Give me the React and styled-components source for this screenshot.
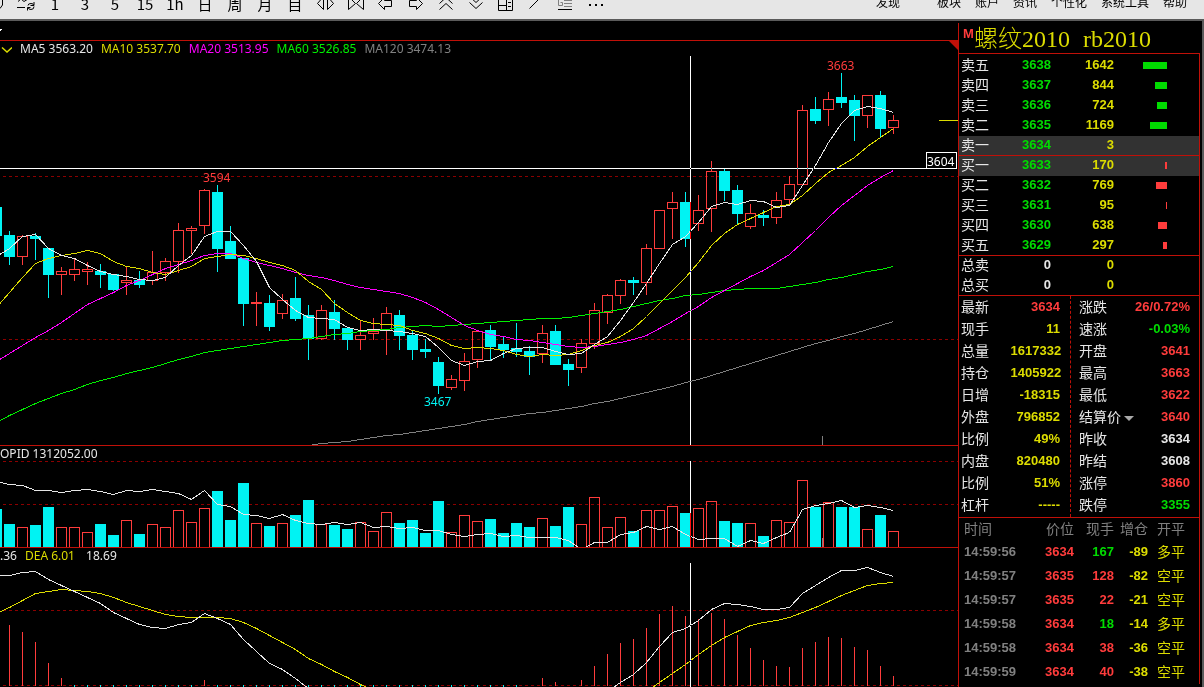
import React from 'react';
import styled, { createGlobalStyle } from 'styled-components';

const GlobalStyle = createGlobalStyle`
  * {
    box-sizing: border-box;
  }

  body {
    margin: 0;
    background-color: #000;
    font-family: 'Liberation Sans', 'Noto Sans CJK SC', sans-serif;
  }
`;

const colors = {
  line: '#c01008',
  grid: '#8c0000',
  red: '#ff3c3c',
  cyan: '#00f3f3',
  green: '#00dc00',
  yellow: '#dcdc00',
  magenta: '#ff00ff',
  lime: '#00f000',
  white: '#e6e6e6',
  gray: '#808080',
};

const Page = styled.div`
  min-height: 100vh;
  display: flex;
  flex-direction: column;
`;

const Toolbar = styled.header`
  display: flex;
  align-items: flex-start;
  height: 21px;
  overflow: hidden;
  background-color: #e6e6e6;
  border-bottom: 2px solid #5a5a5a;
`;

const ToolButton = styled.button`
  flex: none;
  width: ${(props) => (props.$half ? 10 : 30)}px;
  height: 19px;
  padding: 0;
  border: none;
  background: none;
  color: #000;
  cursor: pointer;

  svg {
    display: block;
  }
`;

const PeriodButton = styled(ToolButton)`
  padding-bottom: 12px;
  font-family: 'Noto Sans CJK SC', sans-serif;
  font-size: 15px;
  line-height: 7px;
`;

const Menu = styled.nav`
  display: flex;
  gap: 14px;
  margin-left: auto;
  padding-right: 17px;

  a {
    color: #000;
    font-family: 'Noto Sans CJK SC', sans-serif;
    font-size: 12px;
    line-height: 3px;
    text-decoration: none;
    white-space: nowrap;
  }

  a:first-child {
    margin-right: 23px;
  }
`;

const Workspace = styled.div`
  flex: 1;
  display: flex;
  padding-top: 2px;
  padding-right: 2px;
  border-right: 2px solid #5a5a5a;
`;

const Charts = styled.main`
  flex: 1;
  min-width: 0;
  border-right: 1px solid ${colors.line};
`;

const TabStrip = styled.div`
  height: 18px;
  border-bottom: 1px solid ${colors.line};

  svg {
    display: block;
  }
`;

const Pane = styled.section`
  overflow: hidden;

  & + & {
    border-top: 1px solid ${colors.line};
  }
`;

const Legend = styled.div`
  display: flex;
  gap: 8px;
  height: 15px;
  color: ${colors.white};
  font-family: 'Noto Sans', sans-serif;
  font-size: 12px;
  line-height: 15px;
  white-space: nowrap;
`;

const LegendItem = styled.span`
  color: ${(props) => props.$color};
`;

const FoldButton = styled.button`
  width: 12px;
  height: 15px;
  padding: 0;
  border: none;
  background: none;

  svg {
    display: block;
  }
`;

const CornerMark = styled.span`
  width: 9px;
  height: 9px;
  margin-left: auto;
  background-color: ${colors.line};
  clip-path: polygon(0 0, 100% 0, 100% 100%);
`;

const Plot = styled.svg`
  display: block;
  width: 100%;
  height: ${(props) => props.$height}px;
  shape-rendering: crispEdges;

  text {
    font-family: 'Noto Sans', sans-serif;
    font-size: 12px;
  }

  .cross {
    stroke: #fff;
    mix-blend-mode: difference;
  }
`;

const Side = styled.aside`
  flex: none;
  width: 241px;
`;

const Contract = styled.h1`
  display: flex;
  height: 30px;
  margin: 0;
  padding-left: 4px;
  color: ${colors.yellow};
  font-family: 'Liberation Serif', 'Noto Sans CJK SC', serif;
  font-size: 24px;
  font-weight: 300;
  line-height: 32px;
  white-space: nowrap;

  .mark {
    width: 11px;
    color: ${colors.red};
    font-family: 'Liberation Sans', sans-serif;
    font-size: 13px;
    font-weight: bold;
    line-height: 21px;
  }

  .code {
    margin-left: 13px;
  }
`;

const Panel = styled.div`
  border-top: 1px solid ${colors.line};
  border-right: 1px solid ${colors.line};
`;

const DataTable = styled.table`
  width: 100%;
  table-layout: fixed;
  border-collapse: collapse;
  font-size: 13px;
  font-weight: bold;

  th,
  td {
    height: ${(props) => props.$row}px;
    padding: 0;
    line-height: ${(props) => props.$row}px;
    text-align: right;
    vertical-align: top;
    white-space: nowrap;
  }

  th {
    color: ${colors.white};
    font-family: 'Noto Sans CJK SC', sans-serif;
    font-size: 14px;
    font-weight: 400;
    line-height: ${(props) => props.$row - 2}px;
    text-align: left;
  }
`;

const BookTable = styled(DataTable)`
  margin-top: 2px;

  th {
    padding-left: 2px;
    line-height: 16px;
  }

  td {
    line-height: 18px;
    vertical-align: top;
  }

  td:nth-child(4) {
    padding-top: 6px;
  }

  tr:last-child th,
  tr:last-child td {
    height: 19px;
  }
`;

const BookRow = styled.tr`
  background-color: ${(props) => (props.$best ? '#323232' : 'transparent')};
  box-shadow: ${(props) =>
    props.$line ? `inset 0 -1px 0 ${colors.line}` : 'none'};
`;

const Cell = styled.td`
  color: ${(props) => props.$color || colors.yellow};
`;

const SizeBar = styled.span`
  display: block;
  height: 7px;
  margin-left: auto;
  background-color: ${(props) => props.$color};
`;

const Quotes = styled.div`
  display: flex;
  height: 221px;
`;

const QuoteColumn = styled.div`
  flex: ${(props) => (props.$left ? '0 0 112px' : '1')};
  padding: ${(props) => (props.$left ? '0 10px 0 2px' : '0 9px 0 8px')};
  border-right: ${(props) =>
    props.$left ? `1px dashed ${colors.line}` : 'none'};
`;

const PriceMenu = styled.button`
  display: inline-flex;
  align-items: center;
  gap: 3px;
  padding: 0;
  border: none;
  background: none;
  color: inherit;
  font: inherit;
  line-height: 20px;

  &::after {
    content: '';
    margin-top: 4px;
    border: 5px solid transparent;
    border-top-color: #aaa;
    border-bottom: none;
  }
`;

const TickTable = styled(DataTable)`
  thead th {
    height: 22px;
    color: ${colors.gray};
    line-height: 20px;
    text-align: right;
  }

  thead th:first-child,
  tbody td:first-child {
    padding-left: 5px;
    text-align: left;
  }

  thead th:last-child,
  tbody td:last-child {
    padding-left: 9px;
    text-align: left;
  }

  tbody td:last-child {
    font-family: 'Noto Sans CJK SC', sans-serif;
    font-size: 14px;
    font-weight: 400;
    line-height: 22px;
  }
`;

// [rising, high, low, body top, body bottom, volume top]
const bars = [
  [0, 207, 236, 207, 236, 509],
  [0, 231, 265, 235, 257, 524],
  [1, 235, 265, 236, 257, 527],
  [0, 233, 260, 236, 239, 525],
  [0, 248, 298, 248, 275, 507],
  [1, 267, 295, 271, 275, 527],
  [1, 259, 281, 269, 275, 527],
  [1, 262, 285, 269, 272, 532],
  [0, 264, 288, 271, 275, 524],
  [0, 274, 291, 274, 290, 535],
  [1, 266, 295, 280, 283, 520],
  [0, 271, 288, 280, 285, 534],
  [1, 251, 285, 272, 281, 524],
  [1, 258, 281, 261, 273, 527],
  [1, 223, 273, 230, 262, 510],
  [1, 226, 254, 228, 231, 522],
  [1, 189, 234, 190, 226, 508],
  [0, 185, 272, 192, 249, 491],
  [0, 226, 259, 241, 259, 520],
  [0, 258, 326, 258, 304, 483],
  [1, 292, 326, 302, 304, 523],
  [0, 295, 331, 303, 327, 526],
  [1, 294, 319, 300, 314, 523],
  [0, 277, 321, 298, 319, 515],
  [0, 305, 360, 315, 339, 500],
  [1, 305, 340, 310, 339, 524],
  [0, 300, 340, 312, 329, 525],
  [0, 328, 350, 328, 340, 529],
  [1, 320, 350, 335, 340, 522],
  [1, 318, 340, 331, 334, 531],
  [1, 307, 355, 313, 331, 512],
  [0, 310, 350, 315, 336, 523],
  [0, 331, 360, 335, 350, 520],
  [0, 339, 358, 349, 352, 533],
  [0, 357, 394, 362, 386, 501],
  [1, 375, 390, 379, 388, 532],
  [1, 353, 391, 361, 381, 515],
  [1, 330, 368, 331, 360, 521],
  [0, 325, 360, 330, 347, 519],
  [0, 337, 358, 344, 350, 533],
  [0, 323, 357, 348, 352, 523],
  [0, 346, 375, 351, 357, 527],
  [1, 325, 363, 333, 354, 518],
  [0, 325, 365, 331, 365, 526],
  [0, 359, 386, 364, 370, 507],
  [1, 339, 373, 343, 368, 524],
  [1, 303, 349, 310, 344, 497],
  [1, 294, 324, 295, 313, 527],
  [1, 279, 304, 280, 296, 517],
  [0, 277, 295, 280, 283, 531],
  [1, 244, 295, 248, 283, 510],
  [1, 210, 249, 210, 249, 510],
  [1, 192, 239, 202, 209, 506],
  [0, 192, 247, 202, 239, 513],
  [1, 195, 231, 210, 224, 508],
  [1, 161, 232, 171, 209, 501],
  [0, 169, 201, 171, 191, 521],
  [0, 185, 224, 190, 214, 523],
  [1, 204, 229, 213, 227, 523],
  [0, 210, 226, 215, 218, 536],
  [1, 192, 224, 200, 218, 520],
  [1, 176, 204, 184, 200, 522],
  [1, 105, 185, 110, 185, 480],
  [0, 97, 124, 109, 121, 507],
  [1, 92, 126, 99, 110, 502],
  [0, 73, 108, 97, 103, 507],
  [0, 95, 141, 100, 116, 507],
  [1, 95, 128, 95, 116, 529],
  [0, 91, 138, 95, 129, 515],
  [1, 115, 134, 120, 128, 531],
];

const ma5 = [
  256, 248, 236, 234, 248, 255, 258, 265, 271, 274, 276, 279, 280, 277, 265,
  255, 236, 231, 231, 245, 261, 287, 299, 310, 317, 318, 319, 327, 330, 329,
  330, 331, 333, 336, 347, 360, 365, 361, 360, 353, 348, 347, 347, 351, 354,
  353, 344, 336, 320, 302, 283, 263, 244, 236, 222, 206, 202, 204, 200, 201,
  207, 205, 185, 165, 142, 123, 110, 106, 108, 112,
];

const ma10 = [
  307, 292, 277, 263, 258, 255, 253, 250, 253, 261, 266, 268, 272, 274, 270,
  266, 258, 256, 254, 255, 258, 262, 265, 270, 281, 289, 303, 312, 320, 323,
  324, 325, 330, 333, 338, 345, 348, 347, 348, 350, 354, 356, 354, 355, 354,
  350, 345, 342, 336, 328, 316, 303, 290, 277, 262, 245, 233, 224, 218, 212,
  206, 204, 195, 183, 172, 165, 157, 146, 137, 128,
];

const ma20 = [
  361, 353, 345, 337, 330, 322, 313, 304, 298, 292, 285, 280, 274, 268, 264,
  260, 255, 253, 253, 258, 262, 265, 268, 272, 275, 277, 280, 284, 287, 289,
  291, 293, 297, 302, 309, 317, 325, 330, 334, 336, 339, 340, 342, 344, 346,
  347, 346, 344, 342, 339, 335, 328, 321, 313, 306, 297, 290, 283, 276, 270,
  262, 254, 242, 230, 217, 205, 195, 185, 177, 170,
];

const ma60 = [
  422, 415, 409, 403, 398, 393, 389, 384, 380, 377, 373, 370, 367, 363, 359,
  356, 352, 350, 348, 346, 344, 342, 340, 339, 338, 336, 334, 333, 331, 330,
  329, 327, 326, 325, 326, 325, 324, 323, 322, 321, 320, 319, 318, 318, 317,
  315, 313, 311, 309, 306, 303, 300, 298, 295, 294, 292, 290, 289, 288, 288,
  288, 286, 284, 282, 279, 277, 274, 271, 269, 266,
];

// starts at bar 23
const ma120 = [
  445, 443, 442, 441, 439, 437, 435, 434, 432, 430, 428, 426, 424, 421, 419,
  417, 415, 413, 412, 410, 408, 406, 403, 401, 398, 395, 392, 389, 386, 382,
  379, 375, 371, 367, 363, 359, 355, 351, 347, 343, 340, 336, 333, 329, 325,
  321,
];

const opid = [
  481, 484, 485, 490, 490, 492, 490, 489, 491, 494, 490, 491, 489, 491, 493,
  499, 490, 504, 506, 514, 515, 518, 514, 520, 523, 524, 522, 524, 522, 527,
  526, 528, 527, 530, 530, 534, 536, 534, 533, 536, 535, 537, 537, 537, 540,
  549, 542, 542, 534, 532, 526, 529, 526, 534, 539, 538, 538, 546, 540, 543,
  537, 532, 509, 505, 503, 500, 507, 505, 507, 510,
];

const diffLeft = [
  575, 575, 572, 571, 579, 585, 591, 597, 603, 612, 618, 624, 627, 628, 624,
  622, 613, 618, 624, 639, 651, 663, 669, 678, 688,
];

// starts at bar 46
const diffRight = [
  691, 682, 674, 662, 646, 632, 628, 620, 609, 603, 604, 606, 609, 609, 607,
  593, 585, 577, 570, 570, 567, 572, 576,
];

const deaLeft = [
  613, 607, 600, 593, 591, 589, 590, 591, 593, 597, 602, 606, 610, 614, 616,
  617, 617, 617, 618, 622, 628, 635, 642, 649, 658, 664, 671, 677, 684, 690,
];

// starts at bar 49
const deaRight = [
  691, 682, 673, 664, 654, 645, 637, 631, 625, 622, 620, 617, 612, 607, 601,
  595, 590, 585, 583, 582,
];

const macdUp = {
  0: 625, 1: 632, 2: 642, 3: 663, 4: 678, 15: 680, 41: 678, 42: 682, 44: 680,
  45: 666, 46: 654, 47: 643, 48: 639, 49: 628, 50: 614, 51: 606, 52: 616,
  53: 619, 54: 613, 55: 619, 56: 635, 57: 648, 58: 660, 59: 666, 60: 667,
  61: 648, 62: 642, 63: 637, 64: 638, 65: 647, 66: 650, 67: 666, 68: 676,
};

const macdDown = Array.from({ length: 35 }, (_, i) => i + 5).filter(
  (i) => i !== 15
);

const barX = (i) => 9 + i * 13;

const asks = [
  { name: '卖五', price: 3638, size: 1642, bar: 24 },
  { name: '卖四', price: 3637, size: 844, bar: 12 },
  { name: '卖三', price: 3636, size: 724, bar: 10 },
  { name: '卖二', price: 3635, size: 1169, bar: 17 },
  { name: '卖一', price: 3634, size: 3, bar: 0, best: true, line: true },
];

const bids = [
  { name: '买一', price: 3633, size: 170, bar: 2, best: true },
  { name: '买二', price: 3632, size: 769, bar: 11 },
  { name: '买三', price: 3631, size: 95, bar: 1 },
  { name: '买四', price: 3630, size: 638, bar: 9 },
  { name: '买五', price: 3629, size: 297, bar: 4, line: true },
];

const totals = ['总卖', '总买'];

const quotesLeft = [
  ['最新', '3634', colors.red],
  ['现手', '11'],
  ['总量', '1617332'],
  ['持仓', '1405922'],
  ['日增', '-18315'],
  ['外盘', '796852'],
  ['比例', '49%'],
  ['内盘', '820480'],
  ['比例', '51%'],
  ['杠杆', '-----'],
];

const quotesRight = [
  ['涨跌', '26/0.72%', colors.red],
  ['速涨', '-0.03%', colors.green],
  ['开盘', '3641', colors.red],
  ['最高', '3663', colors.red],
  ['最低', '3622', colors.red],
  ['结算价', '3640', colors.red],
  ['昨收', '3634', colors.white],
  ['昨结', '3608', colors.white],
  ['涨停', '3860', colors.red],
  ['跌停', '3355', colors.green],
];

const ticks = [
  ['14:59:56', 3634, 167, -89, '多平', colors.green],
  ['14:59:57', 3635, 128, -82, '空平', colors.red],
  ['14:59:57', 3635, 22, -21, '空平', colors.red],
  ['14:59:58', 3634, 18, -14, '多平', colors.green],
  ['14:59:58', 3634, 38, -36, '空平', colors.red],
  ['14:59:59', 3634, 40, -38, '空平', colors.red],
];

const periods = ['1', '3', '5', '15', '1h', '日', '周', '月', '目'];

const tools = [
  { name: '缩小', d: 'M13.5 -3.5L7.5 3.5L13.5 9.5ZM17.5 -3.5L23.5 3.5L17.5 9.5Z' },
  { name: '放大', d: 'M8.5 -3.5L15.5 3.5L8.5 9.5ZM23.5 -3.5L16.5 3.5L23.5 9.5Z' },
  { name: '左移', d: 'M8.5 3.5L14.5 -2.5V0.5H21.5V6.5H14.5V9.5Z' },
  { name: '右移', d: 'M22.5 3.5L16.5 -2.5V0.5H9.5V6.5H16.5V9.5Z' },
  { name: '上翻', d: 'M9.5 3.5L16 -2.5L22.5 3.5M9.5 9.5L16 3.5L22.5 9.5' },
  { name: '下翻', d: 'M9.5 -3.5L16 2.5L22.5 -3.5M9.5 2.5L16 8.5L22.5 2.5' },
  {
    name: '布局',
    d: 'M8.5 -4.5H22.5V10.5H8.5ZM16.5 -4V10M9 5.5H16M18 2.5H21M18 6.5H21',
  },
  { name: '画线', d: 'M9.5 8.5L20.5 -2.5' },
];

function Line({ ys, start = -1, color }) {
  const points = ys
    .map((y, i) => `${barX(start + i) + 0.5},${y + 0.5}`)
    .join(' ');
  return <polyline points={points} fill="none" stroke={color} />;
}

function GridLine({ y }) {
  return (
    <line
      x1="3"
      x2="100%"
      y1={y + 0.5}
      y2={y + 0.5}
      stroke={colors.grid}
      strokeDasharray="3 3"
    />
  );
}

function Candle({ bar, x }) {
  const [rising, high, low, top, bottom] = bar;
  if (rising) {
    return (
      <g stroke={colors.red} fill="none">
        <path d={`M${x + 0.5} ${high}V${top}M${x + 0.5} ${bottom}V${low}`} />
        <rect x={x - 4.5} y={top + 0.5} width="10" height={bottom - top - 1} />
      </g>
    );
  }
  return (
    <g fill={colors.cyan}>
      <rect x={x} y={high} width="1" height={low - high} />
      <rect x={x - 5} y={top} width="11" height={bottom - top} />
    </g>
  );
}

function VolumeBar({ rising, top, x }) {
  if (rising) {
    return (
      <path
        d={`M${x - 4.5} 547V${top + 0.5}H${x + 5.5}V547`}
        fill="none"
        stroke={colors.red}
      />
    );
  }
  return (
    <rect x={x - 5} y={top} width="11" height={547 - top} fill={colors.cyan} />
  );
}

function PricePlot() {
  return (
    <Plot $height={389}>
      <g transform="translate(0 -56)">
        <GridLine y={176} />
        <GridLine y={339} />
        {bars.map((bar, i) => (
          <Candle key={i} bar={bar} x={barX(i - 1)} />
        ))}
        <Line ys={ma120} start={23} color={colors.gray} />
        <Line ys={ma60} color={colors.lime} />
        <Line ys={ma20} color={colors.magenta} />
        <Line ys={ma10} color={colors.yellow} />
        <Line ys={ma5} color={colors.white} />
        <rect x="822" y="436" width="1" height="9" fill={colors.gray} />
        <rect x="939" y="120" width="19" height="1" fill={colors.yellow} />
        <text x="203" y="182" fill={colors.red}>3594</text>
        <text x="827" y="70" fill={colors.red}>3663</text>
        <text x="424" y="406" fill={colors.cyan}>3467</text>
        <line className="cross" x1="0" x2="926" y1="168.5" y2="168.5" />
        <line className="cross" x1="690.5" x2="690.5" y1="56" y2="445" />
        <rect x="926.5" y="152.5" width="30" height="16" fill="#000" stroke="#fff" />
        <text x="927" y="166" fill="#fff">3604</text>
      </g>
    </Plot>
  );
}

function VolumePlot() {
  return (
    <Plot $height={86}>
      <g transform="translate(0 -461)">
        <GridLine y={461} />
        <GridLine y={504} />
        {bars.map((bar, i) => (
          <VolumeBar key={i} rising={bar[0]} top={bar[5]} x={barX(i - 1)} />
        ))}
        <Line ys={opid} color={colors.white} />
        <rect x="822" y="538" width="1" height="9" fill={colors.gray} />
        <line className="cross" x1="690.5" x2="690.5" y1="461" y2="547" />
      </g>
    </Plot>
  );
}

function MacdPlot() {
  return (
    <Plot $height={124}>
      <g transform="translate(0 -563)">
        <GridLine y={610} />
        <GridLine y={685} />
        {Object.entries(macdUp).map(([i, y]) => (
          <rect
            key={i}
            x={barX(Number(i))}
            y={y}
            width="1"
            height={686 - y}
            fill={colors.red}
          />
        ))}
        {macdDown.map((i) => (
          <rect key={i} x={barX(i)} y="685" width="1" height="2" fill={colors.cyan} />
        ))}
        <Line ys={deaLeft} color={colors.yellow} />
        <Line ys={deaRight} start={49} color={colors.yellow} />
        <Line ys={diffLeft} color={colors.white} />
        <Line ys={diffRight} start={46} color={colors.white} />
        <line className="cross" x1="690.5" x2="690.5" y1="563" y2="687" />
      </g>
    </Plot>
  );
}

function TopBar() {
  return (
    <Toolbar>
      <ToolButton $half aria-label="查找">
        <svg width="10" height="19" fill="none" stroke="#000">
          <path d="M0 8.5L2.5 5V0" />
        </svg>
      </ToolButton>
      <ToolButton aria-label="刷新">
        <svg width="30" height="19" fill="none" stroke="#000">
          <path d="M8 1.5L11 -1L14 1.5L18 -1M7 7.5H15M18 5.5Q18 3.5 21 3.5Q23.5 3.5 23.5 5M24 2V5.5H20.5M24 6.5Q24 9.5 21 9.5Q18.5 9.5 18 7.5M17.5 10.5V7.5H20.5" />
        </svg>
      </ToolButton>
      {periods.map((name) => (
        <PeriodButton key={name}>{name}</PeriodButton>
      ))}
      {tools.map((tool) => (
        <ToolButton key={tool.name} aria-label={tool.name}>
          <svg width="30" height="19" fill="none" stroke="#000">
            <path d={tool.d} />
          </svg>
        </ToolButton>
      ))}
      <ToolButton aria-label="公式">
        <svg width="30" height="19" fill="none" stroke="#808080">
          <path d="M12.5 -0.5H8.5V5.5H12.5V2.5H10.5M14 0.5H22M14 3.5H22M14 6.5H22" />
          <path d="M8 9.5H22" stroke="#000" />
        </svg>
      </ToolButton>
      <ToolButton aria-label="更多">
        <svg width="30" height="19">
          <path d="M9 4h2v2h-2zM15 4h2v2h-2zM21 4h2v2h-2z" />
        </svg>
      </ToolButton>
      <Menu>
        {['发现', '板块', '账户', '资讯', '个性化', '系统工具', '帮助'].map(
          (name) => (
            <a key={name} href="#">
              {name}
            </a>
          )
        )}
      </Menu>
    </Toolbar>
  );
}

function OrderBook() {
  const renderRow = (color) => (row) => (
    <BookRow key={row.name} $best={row.best} $line={row.line}>
      <th scope="row">{row.name}</th>
      <Cell $color={colors.green}>{row.price}</Cell>
      <Cell>{row.size}</Cell>
      <td>
        <SizeBar $color={color} style={{ width: row.bar }} />
      </td>
      <td />
    </BookRow>
  );

  return (
    <BookTable $row={20}>
      <colgroup>
        <col style={{ width: 40 }} />
        <col style={{ width: 52 }} />
        <col style={{ width: 63 }} />
        <col style={{ width: 53 }} />
        <col />
      </colgroup>
      <tbody>
        {asks.map(renderRow(colors.green))}
        {bids.map(renderRow(colors.red))}
        {totals.map((name) => (
          <tr key={name}>
            <th scope="row">{name}</th>
            <Cell $color={colors.white}>0</Cell>
            <Cell>0</Cell>
            <td />
            <td />
          </tr>
        ))}
      </tbody>
    </BookTable>
  );
}

function QuoteTable({ rows }) {
  return (
    <DataTable $row={22}>
      <tbody>
        {rows.map(([name, value, color], i) => (
          <tr key={i}>
            <th scope="row">
              {name === '结算价' ? <PriceMenu>{name}</PriceMenu> : name}
            </th>
            <Cell $color={color}>{value}</Cell>
          </tr>
        ))}
      </tbody>
    </DataTable>
  );
}

function Ticks() {
  return (
    <TickTable $row={24}>
      <colgroup>
        <col style={{ width: 60 }} />
        <col style={{ width: 55 }} />
        <col style={{ width: 40 }} />
        <col style={{ width: 34 }} />
        <col />
      </colgroup>
      <thead>
        <tr>
          {['时间', '价位', '现手', '增仓', '开平'].map((name) => (
            <th key={name} scope="col">
              {name}
            </th>
          ))}
        </tr>
      </thead>
      <tbody>
        {ticks.map(([time, price, hand, change, kind, color], i) => (
          <tr key={i}>
            <Cell $color={colors.gray}>{time}</Cell>
            <Cell $color={colors.red}>{price}</Cell>
            <Cell $color={color}>{hand}</Cell>
            <Cell>{change}</Cell>
            <Cell>{kind}</Cell>
          </tr>
        ))}
      </tbody>
    </TickTable>
  );
}

export default function App() {
  return (
    <Page>
      <GlobalStyle />
      <TopBar />
      <Workspace>
        <Charts>
          <TabStrip>
            <svg width="4" height="10">
              <path d="M0 6H2V7H1V8H0Z" fill="#fff" />
            </svg>
          </TabStrip>
          <Pane>
            <Legend>
              <FoldButton aria-label="均线">
                <svg width="12" height="15" fill="none" stroke={colors.yellow}>
                  <path d="M2 6.5L7 11L12 6.5" strokeWidth="1.5" />
                </svg>
              </FoldButton>
              <LegendItem $color={colors.white}>MA5 3563.20</LegendItem>
              <LegendItem $color={colors.yellow}>MA10 3537.70</LegendItem>
              <LegendItem $color={colors.magenta}>MA20 3513.95</LegendItem>
              <LegendItem $color={colors.lime}>MA60 3526.85</LegendItem>
              <LegendItem $color={colors.gray}>MA120 3474.13</LegendItem>
              <CornerMark />
            </Legend>
            <PricePlot />
          </Pane>
          <Pane>
            <Legend>
              <LegendItem $color={colors.white}>OPID 1312052.00</LegendItem>
            </Legend>
            <VolumePlot />
          </Pane>
          <Pane>
            <Legend>
              <LegendItem $color={colors.white}>.36</LegendItem>
              <LegendItem $color={colors.yellow}>DEA 6.01</LegendItem>
              <LegendItem $color={colors.white}>&nbsp;18.69</LegendItem>
            </Legend>
            <MacdPlot />
          </Pane>
        </Charts>
        <Side>
          <Contract>
            <span className="mark">M</span>
            <span>螺纹2010</span>
            <span className="code">rb2010</span>
          </Contract>
          <Panel>
            <OrderBook />
          </Panel>
          <Panel>
            <Quotes>
              <QuoteColumn $left>
                <QuoteTable rows={quotesLeft} />
              </QuoteColumn>
              <QuoteColumn>
                <QuoteTable rows={quotesRight} />
              </QuoteColumn>
            </Quotes>
          </Panel>
          <Panel>
            <Ticks />
          </Panel>
        </Side>
      </Workspace>
    </Page>
  );
}
